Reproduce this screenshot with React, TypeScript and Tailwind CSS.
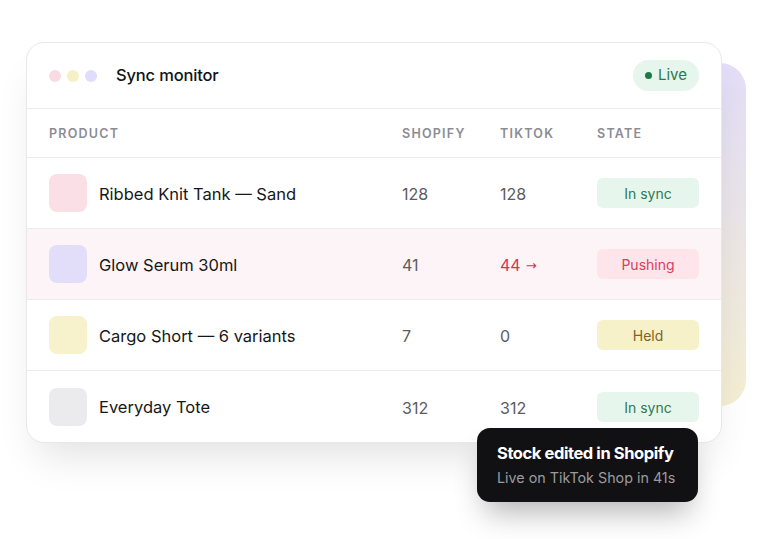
import React from "react";

type Row = {
  name: string;
  swatch: string;
  shopify: string;
  tiktok: string;
  state: "sync" | "push" | "held";
  highlight?: boolean;
};

const rows: Row[] = [
  { name: "Ribbed Knit Tank — Sand", swatch: "bg-[#fbdfe6]", shopify: "128", tiktok: "128", state: "sync" },
  { name: "Glow Serum 30ml", swatch: "bg-[#e2defa]", shopify: "41", tiktok: "44", state: "push", highlight: true },
  { name: "Cargo Short — 6 variants", swatch: "bg-[#f7f2cb]", shopify: "7", tiktok: "0", state: "held" },
  { name: "Everyday Tote", swatch: "bg-[#ebebed]", shopify: "312", tiktok: "312", state: "sync" },
];

function StateBadge({ state }: { state: Row["state"] }) {
  if (state === "push") {
    return <div className="flex h-[30px] items-center justify-center rounded-md bg-[#fde5eb] pt-[1px] text-[14px] text-[#d9405c]">Pushing</div>;
  }
  if (state === "held") {
    return <div className="flex h-[30px] items-center justify-center rounded-md bg-[#f7f1c9] pt-[1px] text-[14px] text-[#7c6420]">Held</div>;
  }
  return <div className="flex h-[30px] items-center justify-center rounded-md bg-[#e6f6ec] pt-[1px] text-[14px] text-[#2f7a50]">In sync</div>;
}

export default function App() {
  return (
    <div className="relative h-[539px] w-[768px] overflow-hidden bg-white pl-[26px] pt-[42px] font-['Inter',sans-serif] text-[#151515]">
      {/* decorative backdrop behind the card */}
      <div className="absolute left-[200px] top-[63px] h-[343px] w-[546px] rounded-[26px] bg-gradient-to-b from-[#e3ddf8] to-[#f4eed2]" />

      <div className="relative w-[696px] overflow-hidden rounded-[18px] border border-[#e8e8ea] bg-white shadow-[0_24px_40px_-12px_rgba(0,0,0,0.12)]">
        {/* header */}
        <div className="flex h-[66px] items-center border-b border-[#ececee] px-[22px]">
          <div className="flex items-center gap-[6px]">
            <span className="h-[12px] w-[12px] rounded-full bg-[#fadbe4]" />
            <span className="h-[12px] w-[12px] rounded-full bg-[#f5f1c6]" />
            <span className="h-[12px] w-[12px] rounded-full bg-[#e0ddfa]" />
          </div>
          <div className="ml-[19px] text-[16.5px] font-medium tracking-[-0.01em] text-[#121212]">Sync monitor</div>
          <div className="ml-auto flex h-[31px] items-center gap-[6px] rounded-full bg-[#e6f6ec] px-[12px] text-[15px] text-[#2b7a4e]">
            <span className="h-[7px] w-[7px] rounded-full bg-[#1d7a48]" />
            Live
          </div>
        </div>

        {/* column heads */}
        <div className="grid h-[49px] grid-cols-[1fr_98px_97px_102px] items-center border-b border-[#ececee] px-[22px] pt-[2px] text-[12.5px] font-semibold tracking-[0.1em] text-[#8c8c94]">
          <div>PRODUCT</div>
          <div>SHOPIFY</div>
          <div>TIKTOK</div>
          <div>STATE</div>
        </div>

        {rows.map((r, i) => (
          <div
            key={r.name}
            className={`grid h-[71px] grid-cols-[1fr_98px_97px_102px] items-center px-[22px] ${i < rows.length - 1 ? "border-b border-[#ececee]" : ""} ${r.highlight ? "bg-[#fcf4f6]" : ""}`}
          >
            <div className="flex items-center gap-[12px]">
              <div className={`h-[38px] w-[38px] rounded-lg ${r.swatch}`} />
              <div className="pt-[2px] text-[16.5px] text-[#171717]">{r.name}</div>
            </div>
            <div className="pt-[2px] text-[16px] text-[#5b5b60]">{r.shopify}</div>
            {r.state === "push" ? (
              <div className="flex items-center gap-[5px] pt-[2px] text-[16px] text-[#d9334f]">
                {r.tiktok}
                <span className="font-['DejaVu_Sans',sans-serif] text-[13px] leading-none">→</span>
              </div>
            ) : (
              <div className="pt-[2px] text-[16px] text-[#5b5b60]">{r.tiktok}</div>
            )}
            <StateBadge state={r.state} />
          </div>
        ))}
      </div>

      {/* toast */}
      <div className="absolute left-[477px] top-[428px] flex h-[74px] w-[221px] flex-col justify-center rounded-[13px] bg-[#111113] px-[20px] shadow-[0_18px_30px_-8px_rgba(0,0,0,0.3)]">
        <div className="whitespace-nowrap text-[16.5px] font-bold tracking-[-0.025em] text-white">Stock edited in Shopify</div>
        <div className="mt-[1px] whitespace-nowrap text-[14.3px] text-[#9b9b9f]">Live on TikTok Shop in 41s</div>
      </div>
    </div>
  );
}
